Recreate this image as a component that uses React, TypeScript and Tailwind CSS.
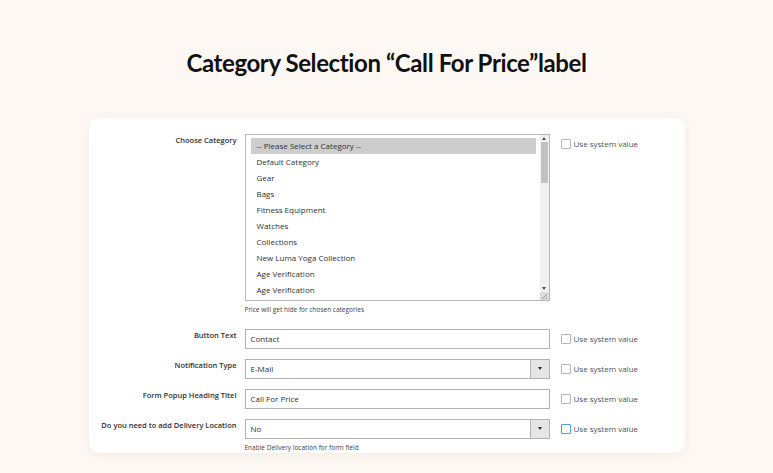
import { ReactNode } from "react";

const categories = [
  "-- Please Select a Category --",
  "Default Category",
  "Gear",
  "Bags",
  "Fitness Equipment",
  "Watches",
  "Collections",
  "New Luma Yoga Collection",
  "Age Verification",
  "Age Verification",
];

function SystemValue({ focused = false }: { focused?: boolean }) {
  return (
    <label className="flex items-center gap-[3px] text-[8px] text-[#505050]">
      <span
        className={
          "h-[10px] w-[10px] rounded-[1px] border bg-white " +
          (focused ? "border-[#4f9fd8]" : "border-[#b5b5b5]")
        }
      />
      Use system value
    </label>
  );
}

function Row({
  label,
  children,
  note,
  focused,
}: {
  label: string;
  children: ReactNode;
  note?: string;
  focused?: boolean;
}) {
  return (
    <div className="flex items-start">
      <div className="w-[148px] shrink-0 pt-[1px] text-right text-[7.5px] font-semibold text-[#303030]">
        {label}
      </div>
      <div className="ml-2 w-[305px] shrink-0">
        {children}
        {note && <div className="mt-[4px] text-[6.5px] text-[#404040]">{note}</div>}
      </div>
      <div className="ml-[11px] pt-[4px]">
        <SystemValue focused={focused} />
      </div>
    </div>
  );
}

function TextInput({ value }: { value: string }) {
  return (
    <div className="flex h-[20px] items-center border border-[#b3b3b3] bg-white px-[5px] text-[8px] text-[#303030]">
      {value}
    </div>
  );
}

function SelectInput({ value }: { value: string }) {
  return (
    <div className="flex h-[20px] items-stretch border border-[#b3b3b3] bg-white text-[8px] text-[#303030]">
      <div className="flex flex-1 items-center px-[5px]">{value}</div>
      <div className="flex w-[19px] items-center justify-center border-l border-[#b3b3b3] bg-[#e6e6e6]">
        <span className="h-0 w-0 border-x-[2.5px] border-t-[3px] border-x-transparent border-t-[#303030]" />
      </div>
    </div>
  );
}

function ListBox() {
  return (
    <div className="flex h-[167px] border border-[#b8b8b8] bg-white">
      <div className="flex-1 py-[3px] pl-[5px] pr-[4px]">
        {categories.map((c, i) => (
          <div
            key={i}
            className={
              "flex h-[16px] items-center pl-[6px] text-[8px] text-[#303030] " +
              (i === 0 ? "bg-[#cdcdcd]" : "")
            }
          >
            {c}
          </div>
        ))}
      </div>
      <div className="flex w-[9px] flex-col bg-[#f1f1f1]">
        <div className="flex h-[7px] items-center justify-center">
          <span className="h-0 w-0 border-x-[2px] border-b-[3px] border-x-transparent border-b-[#505050]" />
        </div>
        <div className="mx-[1px] h-[41px] bg-[#c1c1c1]" />
        <div className="flex-1" />
        <div className="flex h-[7px] items-center justify-center">
          <span className="h-0 w-0 border-x-[2px] border-t-[3px] border-x-transparent border-t-[#505050]" />
        </div>
        <div className="h-[8px] bg-[#dcdcdc]">
          <svg viewBox="0 0 8 8" className="h-[8px] w-[8px]">
            <path d="M7 2 L2 7 M7 5 L5 7" stroke="#888" strokeWidth="0.8" />
          </svg>
        </div>
      </div>
    </div>
  );
}

export default function App() {
  return (
    <div
      className="min-h-screen w-full bg-[#fdf8f4] pt-[45px]"
      style={{ fontFamily: "'Open Sans', 'Noto Sans', sans-serif" }}
    >
      <h1
        className="text-center text-[24px] font-bold tracking-[-0.4px] text-[#111]"
        style={{ fontFamily: "Lato, 'Liberation Sans', sans-serif" }}
      >
        Category Selection “Call For Price”label
      </h1>
      <div className="mx-auto mt-[37px] h-[335px] w-[596px] rounded-[10px] bg-white pt-[16px] shadow-[0_2px_10px_rgba(200,170,150,0.15)]">
        <Row label="Choose Category" note="Price will get hide for chosen categories">
          <ListBox />
        </Row>
        <div className="mt-[14px] flex flex-col gap-[10px]">
          <Row label="Button Text">
            <TextInput value="Contact" />
          </Row>
          <Row label="Notification Type">
            <SelectInput value="E-Mail" />
          </Row>
          <Row label="Form Popup Heading Titel">
            <TextInput value="Call For Price" />
          </Row>
          <Row
            label="Do you need to add Delivery Location"
            note="Enable Delivery location for form field"
            focused
          >
            <SelectInput value="No" />
          </Row>
        </div>
      </div>
    </div>
  );
}
